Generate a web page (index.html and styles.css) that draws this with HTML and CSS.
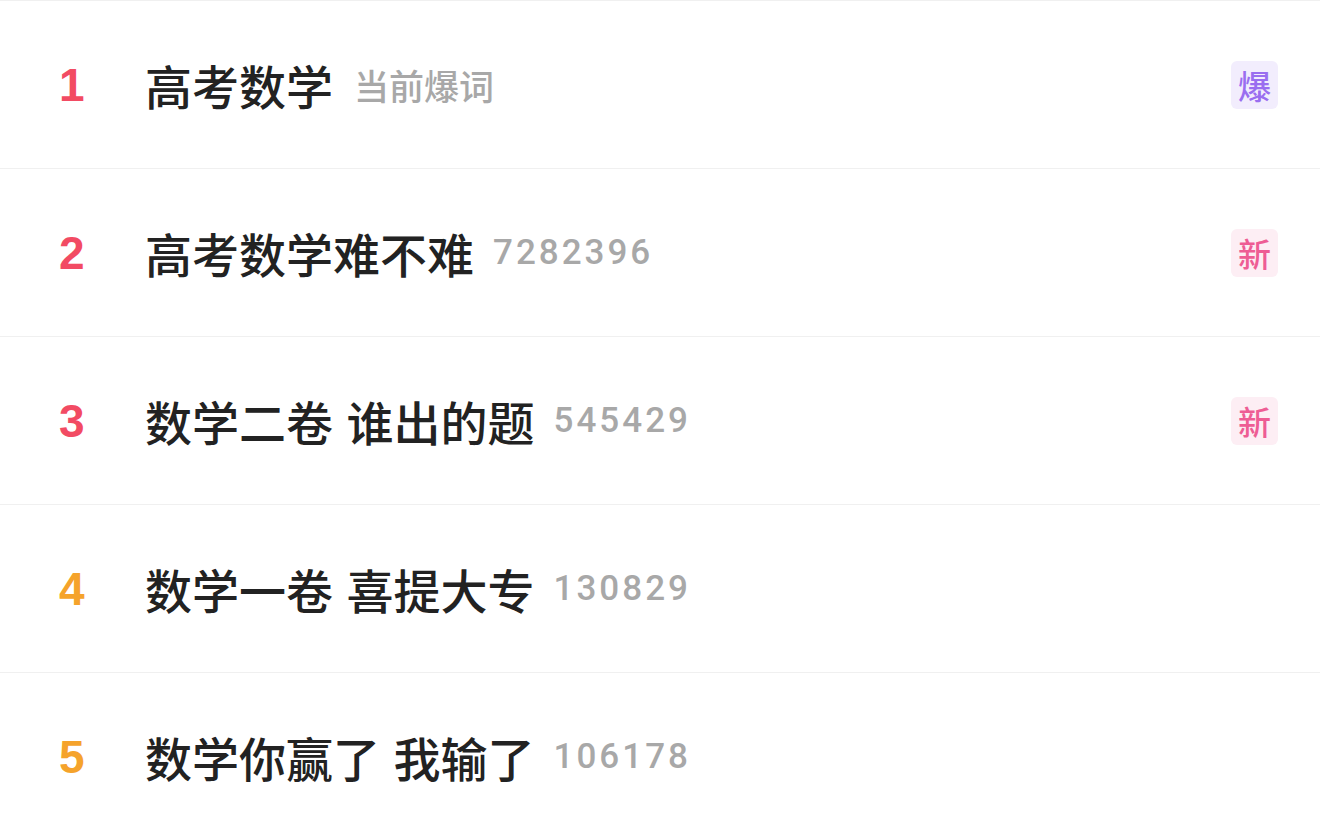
FILE: index.html
```html
<!DOCTYPE html>
<html>

<head>
    <meta charset="utf-8">
    <title>热搜榜</title>
    <link rel="stylesheet" href="styles.css">
</head>

<body>
    <ul class="hot-list">
        <li class="hot-item">
            <span class="rank rank-top">1</span>
            <span class="title">高考数学</span>
            <span class="count count-word">当前爆词</span>
            <span class="badge badge-hot">爆</span>
        </li>
        <li class="hot-item">
            <span class="rank rank-top">2</span>
            <span class="title">高考数学难不难</span>
            <span class="count">7282396</span>
            <span class="badge badge-new">新</span>
        </li>
        <li class="hot-item">
            <span class="rank rank-top">3</span>
            <span class="title">数学二卷 谁出的题</span>
            <span class="count">545429</span>
            <span class="badge badge-new">新</span>
        </li>
        <li class="hot-item">
            <span class="rank">4</span>
            <span class="title">数学一卷 喜提大专</span>
            <span class="count">130829</span>
        </li>
        <li class="hot-item">
            <span class="rank">5</span>
            <span class="title">数学你赢了 我输了</span>
            <span class="count">106178</span>
        </li>
    </ul>
</body>

</html>
```

FILE: styles.css
```css
body {
    margin: 0;
    background-color: #ffffff;
    font-family: "Liberation Sans", "Noto Sans CJK SC", sans-serif;
}

.hot-list {
    list-style: none;
    margin: 0;
    padding: 0;
}

.hot-item {
    display: flex;
    align-items: center;
    height: 167px;
    border-top: 1px solid #f0f0f0;
    padding: 0 42px 0 59px;
}

.rank {
    width: 86px;
    flex-shrink: 0;
    font-size: 46px;
    font-weight: bold;
    color: #f5a32b;
}

.rank-top {
    color: #f24b63;
}

.title {
    font-family: "Noto Sans CJK SC", sans-serif;
    font-size: 47px;
    font-weight: 500;
    color: #222222;
    white-space: pre;
    word-spacing: 3px;
}

.count {
    margin-left: 19px;
    font-family: Roboto, "Liberation Sans", sans-serif;
    font-size: 35px;
    font-weight: 500;
    letter-spacing: 3px;
    color: #a8a8a8;
}

.count-word {
    font-family: "Noto Sans CJK SC", sans-serif;
    font-size: 35px;
    letter-spacing: 0;
    margin-left: 21px;
}

.badge {
    margin-left: auto;
    width: 47px;
    height: 48px;
    border-radius: 6px;
    display: flex;
    align-items: center;
    justify-content: center;
    font-family: "Noto Sans CJK SC", sans-serif;
    font-size: 33px;
    font-weight: 500;
}

.badge-hot {
    background-color: #f2edfd;
    color: #9a6ef0;
}

.badge-new {
    background-color: #fdeef4;
    color: #ee5d94;
}
```
